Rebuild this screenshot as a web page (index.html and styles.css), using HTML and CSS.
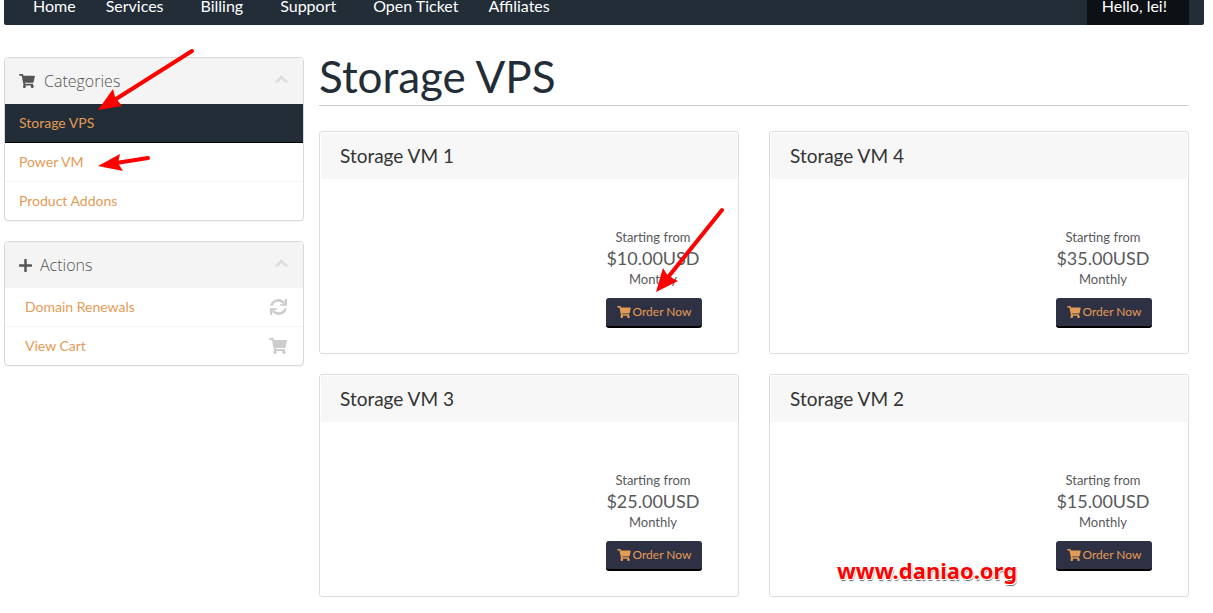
FILE: index.html
```html
<!DOCTYPE html>
<html lang="en">
<head>
<meta charset="utf-8">
<title>Storage VPS</title>
<link rel="stylesheet" href="styles.css">
</head>
<body>
<svg class="sprite" aria-hidden="true">
  <symbol id="cart" viewBox="0 0 576 512"><path d="M528.12 301.319l47.273-208C578.806 78.301 567.391 64 551.99 64H159.208l-9.166-44.81C147.758 8.021 137.93 0 126.529 0H24C10.745 0 0 10.745 0 24v16c0 13.255 10.745 24 24 24h69.883l70.248 343.435C147.325 417.1 136 435.222 136 456c0 30.928 25.072 56 56 56s56-25.072 56-56c0-15.674-6.447-29.835-16.824-40h209.647C430.447 426.165 424 440.326 424 456c0 30.928 25.072 56 56 56s56-25.072 56-56c0-22.172-12.888-41.332-31.579-50.405l5.517-24.276c3.413-15.018-8.002-29.319-23.403-29.319H218.117l-6.545-32h293.145c11.206 0 20.92-7.754 23.403-18.681z"/></symbol>
  <symbol id="plus" viewBox="0 0 12 12"><path d="M6 .9v10.200M.9 6h10.200" fill="none" stroke="currentColor" stroke-width="2.300" stroke-linecap="round"/></symbol>
  <symbol id="chevron" viewBox="0 0 13 9"><path d="M1 7.500l5.500-5.500 5.500 5.500" fill="none" stroke="currentColor" stroke-width="2.500"/></symbol>
  <symbol id="sync" viewBox="0 0 17 16"><path d="M1.500 6.800a7 6.500 0 0 1 12.300-3M15.500 9.200a7 6.500 0 0 1-12.300 3" fill="none" stroke="currentColor" stroke-width="2.500"/><path d="M17 0v6.800h-6.800V5.200l3-.2L14.800 3V0zM0 16V9.200h6.800v1.600l-3 .2L2.200 13v3z"/></symbol>
</svg>

<nav class="navbar">
  <ul class="menu">
    <li><a href="#">Home</a></li>
    <li><a class="wide" href="#">Services</a></li>
    <li><a class="wide" href="#">Billing</a></li>
    <li><a class="wide" href="#">Support</a></li>
    <li><a href="#">Open Ticket</a></li>
    <li><a href="#">Affiliates</a></li>
  </ul>
  <a class="account" href="#">Hello, lei!</a>
</nav>

<div class="layout">
  <aside class="sidebar">
    <section class="panel">
      <h2 class="panel-title"><svg class="icon-cart"><use href="#cart"/></svg>Categories<svg class="chevron"><use href="#chevron"/></svg></h2>
      <a class="item active" href="#">Storage VPS</a>
      <a class="item" href="#">Power VM</a>
      <a class="item" href="#">Product Addons</a>
      <svg class="arrow arrow-storage" viewBox="0 0 100 66"><path class="shaft" d="M94 6L18 54"/><path d="M0 65L15 44l2 8 7 9z"/></svg>
      <svg class="arrow arrow-power" viewBox="0 0 54 20"><path class="shaft" d="M50 5L18 10"/><path d="M0 13L22 1l-2 9 5 8z"/></svg>
    </section>
    <section class="panel">
      <h2 class="panel-title"><svg class="icon-plus"><use href="#plus"/></svg>Actions<svg class="chevron"><use href="#chevron"/></svg></h2>
      <a class="item action" href="#">Domain Renewals<svg class="icon-sync"><use href="#sync"/></svg></a>
      <a class="item action" href="#">View Cart<svg class="icon-cart-end"><use href="#cart"/></svg></a>
    </section>
  </aside>

  <main class="content">
    <h1>Storage VPS</h1>
    <div class="products">
      <article class="product">
        <h3>Storage VM 1</h3>
        <div class="order">
          <p>Starting from</p><p class="price">$10.00USD</p><p>Monthly</p>
          <button type="button"><svg><use href="#cart"/></svg>Order Now</button>
        </div>
        <svg class="arrow arrow-order" viewBox="0 0 72 88"><path class="shaft" d="M67 5L14 71"/><path d="M1 87L8 63l5 8 10 5z"/></svg>
      </article>
      <article class="product">
        <h3>Storage VM 4</h3>
        <div class="order">
          <p>Starting from</p><p class="price">$35.00USD</p><p>Monthly</p>
          <button type="button"><svg><use href="#cart"/></svg>Order Now</button>
        </div>
      </article>
      <article class="product">
        <h3>Storage VM 3</h3>
        <div class="order">
          <p>Starting from</p><p class="price">$25.00USD</p><p>Monthly</p>
          <button type="button"><svg><use href="#cart"/></svg>Order Now</button>
        </div>
      </article>
      <article class="product">
        <h3>Storage VM 2</h3>
        <div class="order">
          <p>Starting from</p><p class="price">$15.00USD</p><p>Monthly</p>
          <button type="button"><svg><use href="#cart"/></svg>Order Now</button>
        </div>
        <span class="watermark">www.daniao.org</span>
      </article>
    </div>
  </main>
</div>
</body>
</html>
```
FILE: styles.css
```css
* { box-sizing: border-box; }

body {
  margin: 0;
  padding: 0 9px 0 4px;
  background: #fff;
  color: #58595b;
  font: 14px/20px Lato, sans-serif;
}

h1, h2, h3, p, ul { margin: 0; padding: 0; font-weight: 400; }
a { color: #e49b55; text-decoration: none; }
svg { flex: none; fill: currentColor; }
.sprite { position: absolute; width: 0; height: 0; }

.navbar {
  display: flex;
  justify-content: space-between;
  height: 25px;
  padding-right: 15px;
  background: #222d38;
  border-radius: 0 0 2px 2px;
}
.menu { display: flex; padding-left: 14px; list-style: none; }
.navbar a {
  display: block;
  padding: 0 15px 14px;
  color: #fff;
  font-size: 16px;
  line-height: 11px;
}
.navbar .wide { padding-right: 22px; }
.navbar .account { background: #0d1116; padding-right: 22px; }

.layout { display: flex; gap: 15px; padding: 32px 15px 0 0; }
.sidebar { flex: none; width: 300px; }

.panel {
  position: relative;
  margin-bottom: 20px;
  border: 1px solid #d8d8d8;
  border-radius: 4px;
  box-shadow: 0 1px 1px rgba(0, 0, 0, .05);
}
.panel-title {
  display: flex;
  align-items: center;
  height: 46px;
  padding: 0 15px 0 14px;
  background: #f4f4f4;
  border-radius: 3px 3px 0 0;
  color: #555;
  font: 300 16px/20px "Open Sans", sans-serif;
}
.chevron { width: 13px; height: 9px; margin: 0 0 4px auto; color: #ddd; }
.icon-cart { width: 16px; height: 14px; margin-right: 9px; }
.icon-plus { width: 13px; height: 13px; margin-right: 8px; }
.item {
  display: flex;
  align-items: center;
  height: 39px;
  padding: 0 14px;
  border-bottom: 1px solid #f4f4f4;
}
.item:last-of-type { height: 38px; border-bottom: 0; }
.active { background: #222d38; border-bottom-color: #000; }
.action { padding: 0 16px 0 20px; }
.action svg { margin-left: auto; color: #ccc; }
.icon-sync { width: 17px; height: 16px; }
.icon-cart-end { width: 18px; height: 16px; }

.content { flex: 1; min-width: 0; }
h1 {
  padding-bottom: 10px;
  border-bottom: 1px solid #ccc;
  color: #222d38;
  font-size: 44px;
  line-height: 38px;
}
.products {
  display: grid;
  grid-template-columns: 1fr 1fr;
  gap: 20px 30px;
  margin-top: 25px;
}
.product {
  position: relative;
  padding: 1px 1px 25px;
  border: 1px solid #ddd;
  border-radius: 3px;
}
.product h3 {
  padding: 11px 19px;
  background: #f7f7f7;
  color: #333;
  font-size: 19px;
  line-height: 24px;
}
.order {
  width: 96px;
  margin: 48px 35px 0 auto;
  text-align: center;
}
.order p { font-size: 13px; line-height: 20px; margin-right: 2px; }
.order .price { font-size: 18px; line-height: 22px; }
.order button {
  display: flex;
  align-items: center;
  justify-content: center;
  gap: 2px;
  width: 100%;
  height: 30px;
  margin-top: 9px;
  padding: 0;
  border: 0;
  border-bottom: 2px solid #000;
  border-radius: 3px;
  background: #2e3144;
  color: #e49b55;
  font: 12px/18px Lato, sans-serif;
}
.order button svg { width: 14px; height: 12px; }

.arrow { position: absolute; z-index: 1; fill: red; }
.shaft { fill: none; stroke: red; stroke-width: 4; stroke-linecap: round; }
.arrow-storage { left: 93px; top: -13px; width: 100px; height: 66px; }
.arrow-power { left: 93px; top: 95px; width: 54px; height: 20px; }
.arrow-order { left: 335px; top: 73px; width: 72px; height: 88px; }

.watermark {
  position: absolute;
  left: 67px;
  bottom: 14px;
  color: red;
  font: bold 22px/24px "Noto Sans", sans-serif;
  text-shadow: 1px 1px 0 #fff, -1px 1px 0 #fff, 1px 2px 1px #666;
}
```
